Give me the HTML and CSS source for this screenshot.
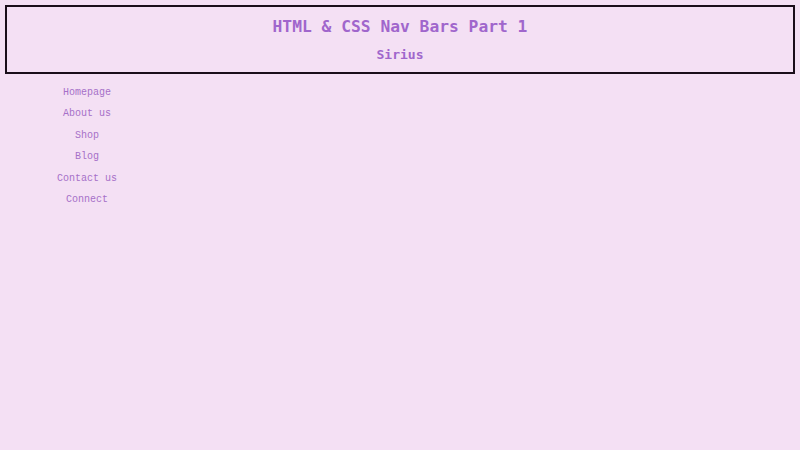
FILE: index.html
```html
<!DOCTYPE html>
<html lang="en">
<head>
    <meta charset="UTF-8">
    <meta name="viewport" content="width=device-width, initial-scale=1.0">
    <title>HTML &amp; CSS Nav Bars Part 1</title>
    <link rel="stylesheet" href="styles.css">
</head>
<body>
    <header class="banner">
        <h1>HTML &amp; CSS Nav Bars Part 1</h1>
        <h2>Sirius</h2>
    </header>

    <nav class="side-nav">
        <a href="#">Homepage</a>
        <a href="#">About us</a>
        <a href="#">Shop</a>
        <a href="#">Blog</a>
        <a href="#">Contact us</a>
        <a href="#">Connect</a>
    </nav>
</body>
</html>
```

FILE: styles.css
```css
body {
    margin: 5px;
    background-color: #f4e0f4;
    font-family: "DejaVu Sans Mono", monospace;
}
.banner {
    border: 2px solid #1a0e1a;
    height: 65px;
    display: flex;
    flex-direction: column;
    align-items: center;
}
.banner h1 {
    margin: 8px 0 0;
    font-size: 16.3px;
    line-height: 24px;
    color: #a066cc;
}
.banner h2 {
    margin: 7px 0 0;
    font-size: 13px;
    line-height: 18px;
    color: #a066cc;
}
.side-nav {
    width: 164px;
    margin-top: 8px;
    display: flex;
    flex-direction: column;
    align-items: center;
    font-family: "Liberation Mono", monospace;
    font-size: 10px;
}
.side-nav a {
    line-height: 21.4px;
    color: #a670c8;
    text-decoration: none;
}
```
